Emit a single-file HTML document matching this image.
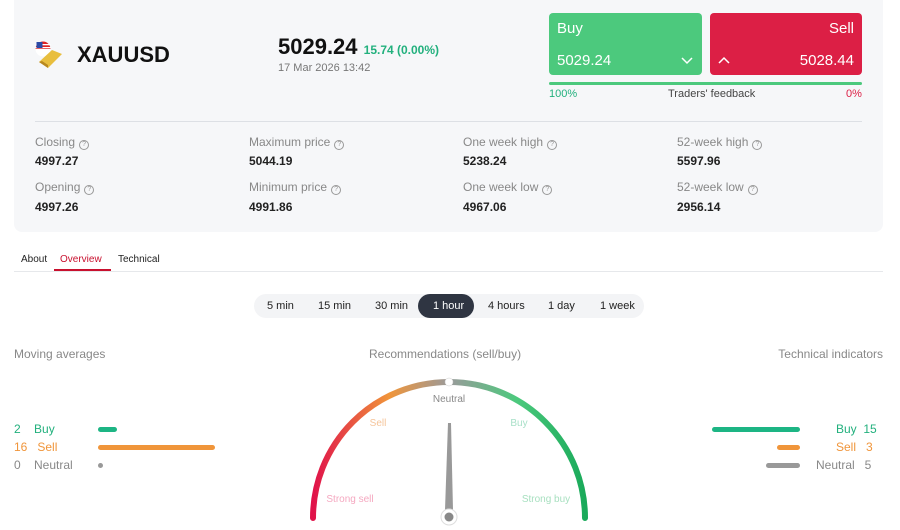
<!DOCTYPE html>
<html><head><style>
*{margin:0;padding:0;box-sizing:border-box}
body{width:900px;height:530px;background:#fff;font-family:"Liberation Sans",sans-serif;position:relative;overflow:hidden;color:#222}
.a{position:absolute}
.panel{left:14px;top:0;width:869px;height:232px;background:#f6f7f9;border-radius:0 0 8px 8px}
.lbl{font-size:12px;color:#888}
.val{font-size:12px;font-weight:bold;color:#222}
.q{display:inline-block;width:10px;height:10px;border:1px solid #999;border-radius:50%;font-size:7px;text-align:center;line-height:8px;color:#999;margin-left:4px;vertical-align:0}
.tf{height:24px;top:294px;background:#f3f4f6;border-radius:12px;left:254px;width:390px}
.tb{font-size:11px;color:#222;top:300px}
</style></head><body>
<div class="a panel"></div>
<svg class="a" style="left:34px;top:40px" width="30" height="30" viewBox="0 0 30 30">
<circle cx="9" cy="9" r="7.5" fill="#fff"/><path d="M1.5 9a7.5 7.5 0 0 1 15 0z" fill="#d22"/><rect x="1.5" y="4" width="15" height="1.3" fill="#fff"/><rect x="1.5" y="7" width="15" height="1.3" fill="#fff"/><rect x="2.5" y="2" width="6" height="6" fill="#2b4aa6"/>
<path d="M5 22 L18 10 L28 14 L14 28 Z" fill="#e8be3e"/><path d="M5 22 L14 28 L14 25 L8 21 Z" fill="#b8881f"/>
</svg>
<div class="a" style="left:77px;top:42px;font-size:22px;font-weight:bold;color:#111">XAUUSD</div>
<div class="a" style="left:278px;top:34px;font-size:22px;font-weight:bold;color:#111">5029.24 <span style="font-size:12px;color:#22b07d">15.74 (0.00%)</span></div>
<div class="a" style="left:278px;top:62px;font-size:11px;color:#777">17 Mar 2026 13:42</div>
<div class="a" style="left:549px;top:13px;width:153px;height:62px;background:#4cc97d;border-radius:4px;color:#fff">
<div class="a" style="left:8px;top:7px;font-size:15px">Buy</div><div class="a" style="left:8px;top:39px;font-size:15px">5029.24</div>
<svg class="a" style="left:132px;top:44px" width="12" height="8"><path d="M1 1 L6 6 L11 1" fill="none" stroke="#fff" stroke-width="1.5"/></svg></div>
<div class="a" style="left:710px;top:13px;width:152px;height:62px;background:#dc1f45;border-radius:4px;color:#fff">
<div class="a" style="right:8px;top:7px;font-size:15px">Sell</div><div class="a" style="right:8px;top:39px;font-size:15px">5028.44</div>
<svg class="a" style="left:8px;top:43px" width="12" height="8"><path d="M1 7 L6 2 L11 7" fill="none" stroke="#fff" stroke-width="1.5"/></svg></div>
<div class="a" style="left:549px;top:82px;width:313px;height:3px;background:#4cc97d;border-radius:2px"></div>
<div class="a" style="left:549px;top:88px;font-size:11px;color:#22b07d">100%</div>
<div class="a" style="left:668px;top:88px;font-size:11px;color:#444">Traders' feedback</div>
<div class="a" style="left:846px;top:88px;font-size:11px;color:#dc1f45">0%</div>
<div class="a" style="left:35px;top:121px;width:827px;height:1px;background:#dde0e5"></div>
<div class="a lbl" style="left:35px;top:135px">Closing<span class="q">?</span></div><div class="a val" style="left:35px;top:154px">4997.27</div>
<div class="a lbl" style="left:35px;top:180px">Opening<span class="q">?</span></div><div class="a val" style="left:35px;top:200px">4997.26</div>
<div class="a lbl" style="left:249px;top:135px">Maximum price<span class="q">?</span></div><div class="a val" style="left:249px;top:154px">5044.19</div>
<div class="a lbl" style="left:249px;top:180px">Minimum price<span class="q">?</span></div><div class="a val" style="left:249px;top:200px">4991.86</div>
<div class="a lbl" style="left:463px;top:135px">One week high<span class="q">?</span></div><div class="a val" style="left:463px;top:154px">5238.24</div>
<div class="a lbl" style="left:463px;top:180px">One week low<span class="q">?</span></div><div class="a val" style="left:463px;top:200px">4967.06</div>
<div class="a lbl" style="left:677px;top:135px">52-week high<span class="q">?</span></div><div class="a val" style="left:677px;top:154px">5597.96</div>
<div class="a lbl" style="left:677px;top:180px">52-week low<span class="q">?</span></div><div class="a val" style="left:677px;top:200px">2956.14</div>
<div class="a" style="left:14px;top:271px;width:869px;height:1px;background:#e6e8eb"></div>
<div class="a" style="left:21px;top:254px;font-size:10px">About</div>
<div class="a" style="left:60px;top:254px;font-size:10px;color:#c8102e">Overview</div>
<div class="a" style="left:54px;top:269px;width:57px;height:2px;background:#c8102e"></div>
<div class="a" style="left:118px;top:254px;font-size:10px">Technical</div>
<div class="a tf"></div>
<div class="a" style="left:418px;top:294px;width:56px;height:24px;background:#2f3542;border-radius:12px"></div>
<div class="a tb" style="left:267px">5 min</div><div class="a tb" style="left:318px">15 min</div><div class="a tb" style="left:375px">30 min</div>
<div class="a tb" style="left:433px;color:#fff">1 hour</div><div class="a tb" style="left:488px">4 hours</div><div class="a tb" style="left:548px">1 day</div><div class="a tb" style="left:600px">1 week</div>
<div class="a" style="left:14px;top:347px;font-size:12px;color:#888">Moving averages</div>
<div class="a" style="left:369px;top:347px;font-size:12px;color:#888">Recommendations (sell/buy)</div>
<div class="a" style="right:17px;top:347px;font-size:12px;color:#888">Technical indicators</div>
<div class="a" style="left:14px;top:422px;font-size:12px;color:#22b07d">2 &nbsp;&nbsp;&nbsp;Buy</div>
<div class="a" style="left:14px;top:440px;font-size:12px;color:#f0953a">16 &nbsp;&nbsp;Sell</div>
<div class="a" style="left:14px;top:458px;font-size:12px;color:#888">0 &nbsp;&nbsp;&nbsp;Neutral</div>
<div class="a" style="left:98px;top:427px;width:19px;height:5px;background:#1db584;border-radius:3px"></div>
<div class="a" style="left:98px;top:445px;width:117px;height:5px;background:#f0953a;border-radius:3px"></div>
<div class="a" style="left:98px;top:463px;width:5px;height:5px;background:#999;border-radius:3px"></div>
<div class="a" style="left:712px;top:427px;width:88px;height:5px;background:#1db584;border-radius:3px"></div>
<div class="a" style="left:777px;top:445px;width:23px;height:5px;background:#f0953a;border-radius:3px"></div>
<div class="a" style="left:766px;top:463px;width:34px;height:5px;background:#999;border-radius:3px"></div>
<div class="a" style="left:836px;top:422px;font-size:12px;color:#22b07d">Buy &nbsp;15</div>
<div class="a" style="left:836px;top:440px;font-size:12px;color:#f0953a">Sell &nbsp;&nbsp;3</div>
<div class="a" style="left:816px;top:458px;font-size:12px;color:#888">Neutral &nbsp;&nbsp;5</div>
<svg class="a" style="left:300px;top:370px" width="300" height="160" viewBox="300 370 300 160">
<defs><linearGradient id="g" x1="313" y1="0" x2="585" y2="0" gradientUnits="userSpaceOnUse">
<stop offset="0" stop-color="#e0124a"/><stop offset="0.28" stop-color="#f0953a"/><stop offset="0.5" stop-color="#9a9a9a"/><stop offset="0.75" stop-color="#4cc97d"/><stop offset="1" stop-color="#1aaa5a"/></linearGradient></defs>
<path d="M313 518 A136 136 0 0 1 585 518" fill="none" stroke="url(#g)" stroke-width="6" stroke-linecap="round"/>
<circle cx="449" cy="382" r="4" fill="#fff" stroke="#ccc" stroke-width="0.5"/>
<text x="449" y="402" font-size="10" fill="#888" text-anchor="middle" font-family="Liberation Sans">Neutral</text>
<text x="378" y="426" font-size="10" fill="#f5c49a" text-anchor="middle" font-family="Liberation Sans">Sell</text>
<text x="519" y="426" font-size="10" fill="#a8e0c8" text-anchor="middle" font-family="Liberation Sans">Buy</text>
<text x="350" y="502" font-size="10" fill="#f5a8c0" text-anchor="middle" font-family="Liberation Sans">Strong sell</text>
<text x="546" y="502" font-size="10" fill="#a8e0c0" text-anchor="middle" font-family="Liberation Sans">Strong buy</text>
<path d="M448 423 L451 423 L453 510 L445 510 Z" fill="#999"/>
<circle cx="449" cy="517" r="8" fill="#fff" stroke="#ddd"/><circle cx="449" cy="517" r="4.5" fill="#888"/>
</svg>
</body></html>
